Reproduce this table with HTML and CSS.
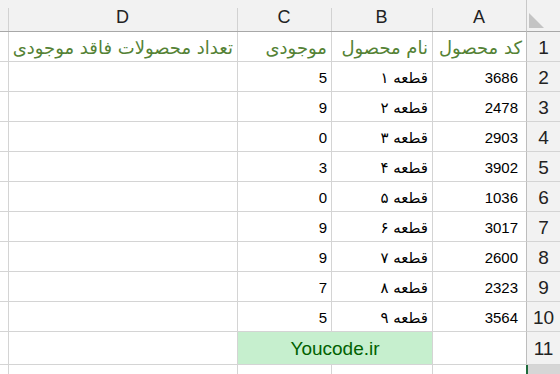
FILE: index.html
```html
<!DOCTYPE html>
<html lang="fa">
<head>
<meta charset="utf-8">
<link rel="stylesheet" href="styles.css">
</head>
<body>
<div class="sheet">
  <div class="corner"><span class="tri"></span></div>
  <div class="colh">A</div>
  <div class="colh">B</div>
  <div class="colh">C</div>
  <div class="colh">D</div>
  <div class="colh edge"></div>

  <div class="rowh">1</div>
  <div class="cell title">کد محصول</div>
  <div class="cell title">نام محصول</div>
  <div class="cell title">موجودی</div>
  <div class="cell title">تعداد محصولات فاقد موجودی</div>
  <div class="cell"></div>

  <div class="rowh">2</div>
  <div class="cell num code">3686</div>
  <div class="cell fa">قطعه ۱</div>
  <div class="cell num">5</div>
  <div class="cell"></div>
  <div class="cell"></div>

  <div class="rowh">3</div>
  <div class="cell num code">2478</div>
  <div class="cell fa">قطعه ۲</div>
  <div class="cell num">9</div>
  <div class="cell"></div>
  <div class="cell"></div>

  <div class="rowh">4</div>
  <div class="cell num code">2903</div>
  <div class="cell fa">قطعه ۳</div>
  <div class="cell num">0</div>
  <div class="cell"></div>
  <div class="cell"></div>

  <div class="rowh">5</div>
  <div class="cell num code">3902</div>
  <div class="cell fa">قطعه ۴</div>
  <div class="cell num">3</div>
  <div class="cell"></div>
  <div class="cell"></div>

  <div class="rowh">6</div>
  <div class="cell num code">1036</div>
  <div class="cell fa">قطعه ۵</div>
  <div class="cell num">0</div>
  <div class="cell"></div>
  <div class="cell"></div>

  <div class="rowh">7</div>
  <div class="cell num code">3017</div>
  <div class="cell fa">قطعه ۶</div>
  <div class="cell num">9</div>
  <div class="cell"></div>
  <div class="cell"></div>

  <div class="rowh">8</div>
  <div class="cell num code">2600</div>
  <div class="cell fa">قطعه ۷</div>
  <div class="cell num">9</div>
  <div class="cell"></div>
  <div class="cell"></div>

  <div class="rowh">9</div>
  <div class="cell num code">2323</div>
  <div class="cell fa">قطعه ۸</div>
  <div class="cell num">7</div>
  <div class="cell"></div>
  <div class="cell"></div>

  <div class="rowh">10</div>
  <div class="cell num code">3564</div>
  <div class="cell fa">قطعه ۹</div>
  <div class="cell num">5</div>
  <div class="cell"></div>
  <div class="cell"></div>

  <div class="rowh r11">11</div>
  <div class="cell r11"></div>
  <div class="cell brand r11">Youcode.ir</div>
  <div class="cell r11"></div>
  <div class="cell r11"></div>

  <div class="rowh sel">12</div>
  <div class="cell"></div>
  <div class="cell"></div>
  <div class="cell"></div>
  <div class="cell"></div>
  <div class="cell"></div>
</div>
</body>
</html>
```

FILE: styles.css
```css
html, body {
  margin: 0;
  padding: 0;
  background: #ffffff;
  overflow: hidden;
}

.sheet {
  direction: rtl;
  display: grid;
  grid-template-columns: 34px 94px 101px 94px 229px 8px;
  grid-template-rows: 32px repeat(10, 30px) 33px 30px;
  width: 560px;
  font-family: "Liberation Sans", Arial, sans-serif;
  color: #000;
}

.corner {
  background: #f2f2f2;
  border-bottom: 1px solid #a8a8a8;
  border-left: 1px solid #c8c8c8;
  box-sizing: border-box;
  position: relative;
}

.tri {
  position: absolute;
  left: 2px;
  top: 13px;
  width: 0;
  height: 0;
  border-bottom: 15px solid #c4c4c4;
  border-right: 15px solid transparent;
}

.colh {
  background: #f2f2f2;
  border-bottom: 1px solid #a8a8a8;
  box-sizing: border-box;
  display: flex;
  align-items: center;
  justify-content: center;
  padding-top: 4px;
  font-size: 18px;
  color: #222;
  background-image: linear-gradient(#d2d2d2, #d2d2d2);
  background-size: 1px 23px;
  background-position: left bottom;
  background-repeat: no-repeat;
}

.colh.edge {
  background-image: none;
}

.rowh {
  background: #f2f2f2;
  border-bottom: 1px solid #d4d4d4;
  border-left: 1px solid #bdbdbd;
  box-sizing: border-box;
  display: flex;
  align-items: center;
  justify-content: center;
  padding-top: 2px;
  font-size: 19px;
  color: #222;
}

.rowh.sel {
  background: #d6d6d6;
  border-left: 2px solid #1e6b3c;
  align-items: flex-start;
  padding-top: 6px;
}

.cell {
  border-bottom: 1px solid #d4d4d4;
  border-left: 1px solid #d4d4d4;
  box-sizing: border-box;
  display: flex;
  align-items: center;
  justify-content: flex-start;
  padding: 2px 4px 0 4px;
  font-size: 15px;
  white-space: nowrap;
  overflow: hidden;
}

.title {
  font-family: "DejaVu Sans", sans-serif;
  font-size: 18px;
  color: #548235;
}

.fa {
  font-family: "DejaVu Sans", sans-serif;
  font-size: 15px;
}

.num {
  font-family: "Liberation Sans", Arial, sans-serif;
}

.code {
  padding-right: 8px;
}

.brand {
  grid-column: span 2;
  background: #c6efce;
  color: #006100;
  justify-content: center;
  font-size: 19px;
}
```
